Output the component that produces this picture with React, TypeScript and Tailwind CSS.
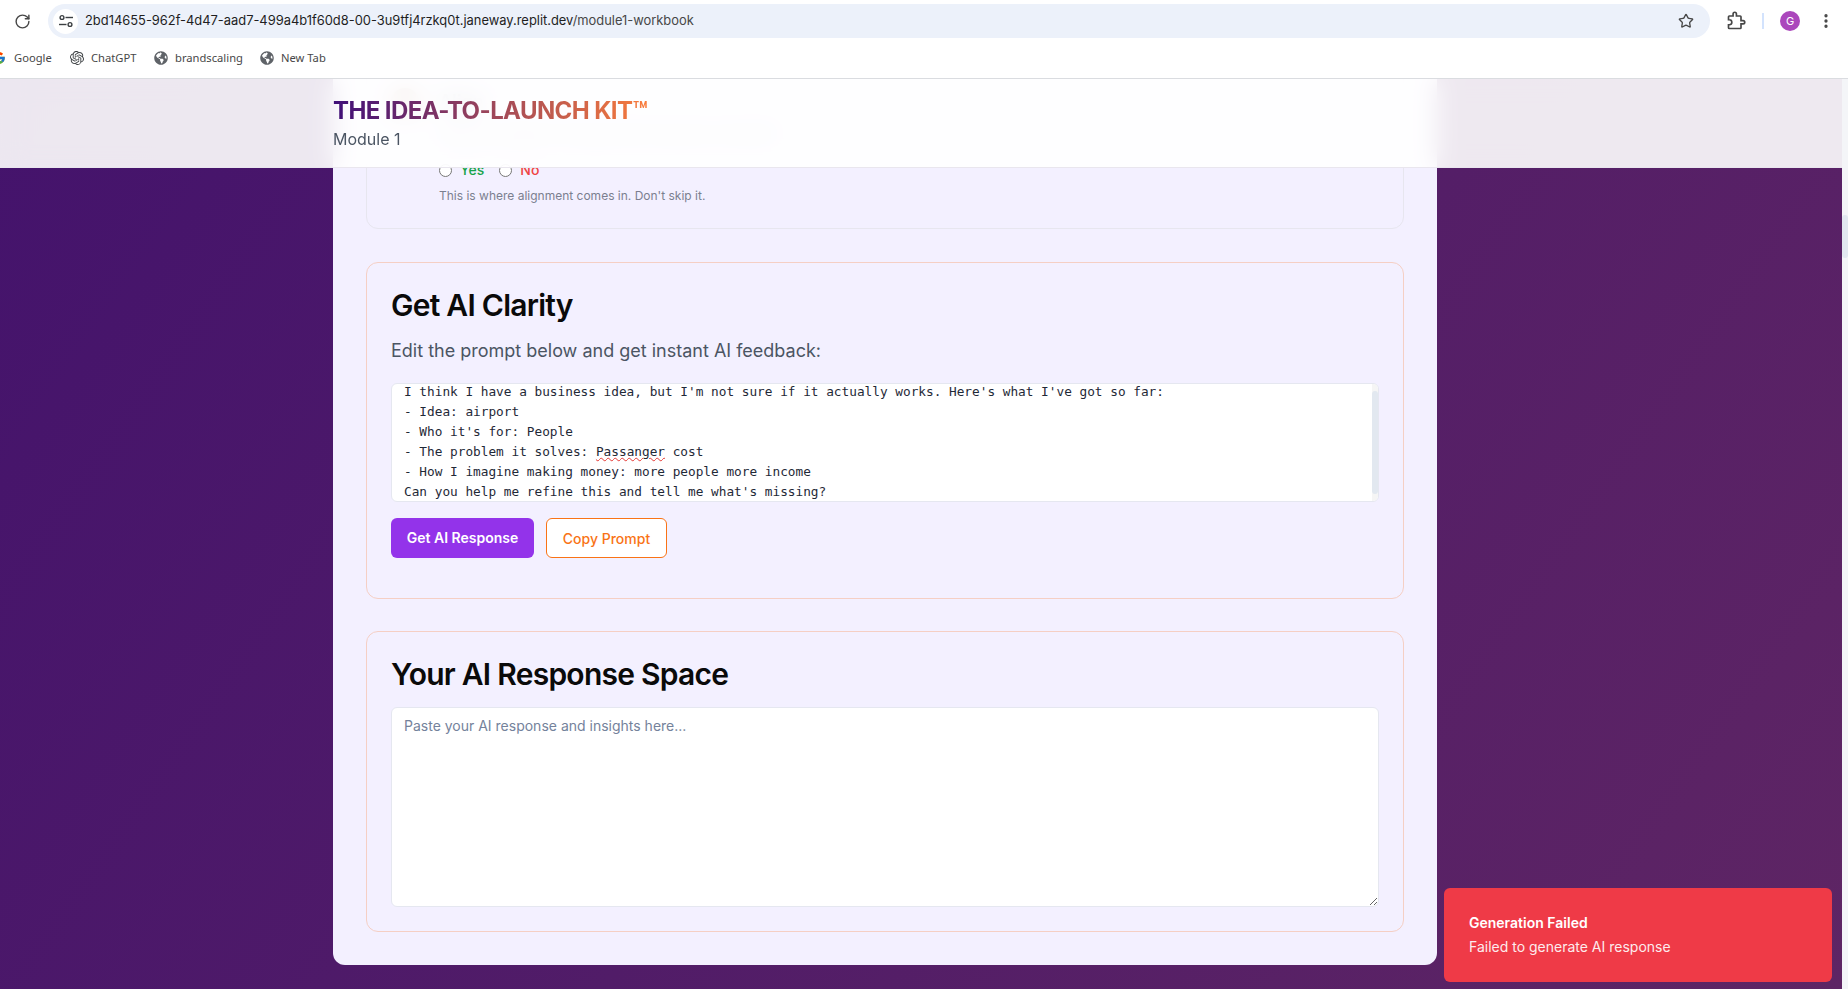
import { MoreVertical, RotateCw, Star } from "lucide-react";
import { FaGlobeAmericas } from "react-icons/fa";
import { FcGoogle } from "react-icons/fc";
import { SiOpenai } from "react-icons/si";

const bookmarks = [
  { label: "ChatGPT", icon: <SiOpenai className="h-[14px] w-[14px] text-[#3c4043]" />, width: "w-[84px]" },
  { label: "brandscaling", icon: <FaGlobeAmericas className="h-[14px] w-[14px] text-[#5f6368]" />, width: "w-[106px]" },
  { label: "New Tab", icon: <FaGlobeAmericas className="h-[14px] w-[14px] text-[#5f6368]" />, width: "w-[80px]" },
];

const promptLines = [
  "I think I have a business idea, but I'm not sure if it actually works. Here's what I've got so far:",
  "- Idea: airport",
  "- Who it's for: People",
];

function TuneIcon() {
  return (
    <svg viewBox="0 0 16 16" className="h-4 w-4 text-[#3c4043]" fill="none" stroke="currentColor" strokeWidth="1.4">
      <circle cx="4" cy="4.5" r="1.9" />
      <path d="M7.5 4.5H15" />
      <path d="M1 11.5h7.5" />
      <circle cx="12" cy="11.5" r="1.9" />
    </svg>
  );
}

function ExtensionIcon() {
  return (
    <svg viewBox="0 0 24 24" className="h-5 w-5 text-[#474747]" fill="none" stroke="currentColor" strokeWidth="2">
      <path d="M20.5 11.5H18V7c0-.6-.4-1-1-1h-4.500V3.500a2 2 0 0 0-4 0V6H4c-.6 0-1 .4-1 1v3.500h1a3 3 0 0 1 0 6H3V20c0 .6.4 1 1 1h13c.6 0 1-.4 1-1v-4.500h2.500a2 2 0 0 0 0-4z" />
    </svg>
  );
}

function BrowserChrome() {
  return (
    <div className="h-[79px] shrink-0 border-b border-[#dadce0] bg-white">
      <div className="flex h-[42px] items-start pt-1">
        <div className="flex h-[34px] w-[48px] items-center justify-center pr-1">
          <RotateCw className="h-[17px] w-[17px] text-[#474747]" strokeWidth={2} />
        </div>
        <div className="flex h-[34px] w-[1662px] items-center rounded-full bg-[#ecf1fa] pl-[5px] pr-[16px]">
          <div className="flex h-[25px] w-[25px] items-center justify-center rounded-full bg-white">
            <TuneIcon />
          </div>
          <div className="ml-[7px] flex-1 text-[12.9px] text-[#1f1f1f]">
            2bd14655-962f-4d47-aad7-499a4b1f60d8-00-3u9tfj4rzkq0t.janeway.replit.dev
            <span className="text-[#474747]">/module1-workbook</span>
          </div>
          <Star className="h-[16px] w-[16px] text-[#474747]" strokeWidth={2} />
        </div>
        <div className="flex h-[34px] items-center">
          <div className="ml-[16px] flex w-5 justify-center">
            <ExtensionIcon />
          </div>
          <div className="ml-[16px] h-4 w-0.5 bg-[#d3e3fd]" />
          <div className="ml-[16px] flex h-5 w-5 items-center justify-center rounded-full bg-[#ab47bc] text-[11px] text-white">G</div>
          <MoreVertical className="ml-[17px] h-[18px] w-[18px] text-[#474747]" strokeWidth={2.4} />
        </div>
      </div>
      <div className="flex h-[36px] items-center pb-[4px] font-['Noto_Sans',sans-serif] text-[11.2px] text-[#474747]">
        <div className="-ml-2 flex w-[78px] items-center gap-2">
          <FcGoogle className="h-[14px] w-[14px]" />
          <span>Google</span>
        </div>
        {bookmarks.map((b) => (
          <div key={b.label} className={`flex items-center gap-[7px] ${b.width}`}>
            {b.icon}
            <span>{b.label}</span>
          </div>
        ))}
      </div>
    </div>
  );
}

function AlignmentCard() {
  return (
    <section className="mb-[33px] flex rounded-xl border border-[#e7e6ef] px-6 pb-[22px] pt-6">
      <div className="mr-[20px] h-[28px] w-[28px] shrink-0 rounded-full bg-[#b98a72]" />
      <div>
        <h3 className="text-[18px] font-semibold text-[#1f2937]">Align</h3>
        <p className="mt-2 text-[14px] text-[#6b7280]">Have you talked it through with everyone involved?</p>
        <div className="mt-4 flex items-center text-[14px] font-medium leading-5">
          <input type="radio" name="aligned" className="mr-[8px] h-[13px] w-[13px]" />
          <span className="mr-[15px] text-[#16a34a]">Yes</span>
          <input type="radio" name="aligned" className="mr-[8px] h-[13px] w-[13px]" />
          <span className="text-[#ef4444]">No</span>
        </div>
        <p className="mt-[6px] text-[12px] leading-[20px] text-[#7b7f8f]">This is where alignment comes in. Don't skip it.</p>
      </div>
    </section>
  );
}

function PromptBox() {
  return (
    <div className="flex h-[119px] overflow-hidden rounded-md border border-[#e5e7f0] bg-white">
      <div className="flex-1 overflow-hidden pl-3 font-['DejaVu_Sans_Mono',monospace] text-[12.76px] leading-[20px] text-[#1f2937]">
        <div className="-mt-[2px]">
          {promptLines.map((line) => (
            <div key={line}>{line}</div>
          ))}
          <div>
            - The problem it solves:{" "}
            <span className="underline decoration-[#e53935] decoration-wavy decoration-1">Passanger</span> cost
          </div>
          <div>- How I imagine making money: more people more income</div>
          <div>Can you help me refine this and tell me what's missing?</div>
        </div>
      </div>
      <div className="flex w-[6px] flex-col bg-[#f5f5f5] py-[7px]">
        <div className="flex-1 rounded-full bg-[#e2e8f0]" />
      </div>
    </div>
  );
}

export default function App() {
  return (
    <div className="flex h-screen w-full flex-col overflow-hidden font-['Inter',sans-serif]">
      <BrowserChrome />
      <div className="flex min-h-0 flex-1">
        <main className="relative flex min-w-0 flex-1 flex-col justify-end overflow-hidden bg-[linear-gradient(125deg,#44136c,#5e2564)] pb-[24px] pl-[333px]">
          <div className="w-[1104px] rounded-xl bg-[#f3f0ff] px-[33px] pb-[33px]">
            <AlignmentCard />

            <section className="mb-8 rounded-xl border border-[#f5cfc4] px-6 pb-[40px] pt-6">
              <h2 className="text-[30px] font-semibold leading-9 tracking-tight text-[#0a0a0a]">Get AI Clarity</h2>
              <p className="mb-[18px] mt-[14px] text-[18px] leading-7 text-[#4b5563]">
                Edit the prompt below and get instant AI feedback:
              </p>
              <PromptBox />
              <div className="mt-[16px] flex gap-3">
                <button className="h-10 w-[143px] rounded-md bg-[#9333ea] pb-px text-[14px] font-semibold text-white">Get AI Response</button>
                <button className="h-10 w-[121px] rounded-md border border-[#f97316] bg-white text-[14px] font-medium text-[#f97316]">Copy Prompt</button>
              </div>
            </section>

            <section className="rounded-xl border border-[#f5cfc4] p-6">
              <h2 className="mb-[14px] text-[30px] font-semibold leading-[37px] tracking-tight text-[#0a0a0a]">Your AI Response Space</h2>
              <textarea
                className="block h-[200px] w-full rounded-md border border-[#e5e7f0] bg-white px-3 py-2 text-[14px] leading-5 placeholder:text-[#74829b]"
                placeholder="Paste your AI response and insights here..."
              />
            </section>
          </div>

          {/* sticky header over the scrolled page */}
          <header className="absolute left-0 right-0 top-0 border-b border-[#e9e6ee] bg-white/90 backdrop-blur-md">
            <div className="ml-[333px] py-4">
              <h1 className="w-fit bg-[linear-gradient(90deg,#3f0f78,#f97c3c)] bg-clip-text text-[24px] font-bold leading-8 tracking-tight text-transparent">
                THE IDEA-TO-LAUNCH KIT™
              </h1>
              <p className="text-[16px] leading-6 text-[#4b5563]">Module 1</p>
            </div>
          </header>

          <div className="absolute bottom-[7px] right-[10px] w-[388px] rounded-md bg-[#ef3a47] p-[25px] text-[14px] leading-5 text-white">
            <div className="font-semibold">Generation Failed</div>
            <div className="mt-1 opacity-90">Failed to generate AI response</div>
          </div>
        </main>

        {/* page scrollbar */}
        <div className="flex w-[6px] shrink-0 flex-col bg-[#f4f5f8] pt-[136px]">
          <div className="h-[43px] rounded-full bg-[#e2e8f0]" />
        </div>
      </div>
    </div>
  );
}
